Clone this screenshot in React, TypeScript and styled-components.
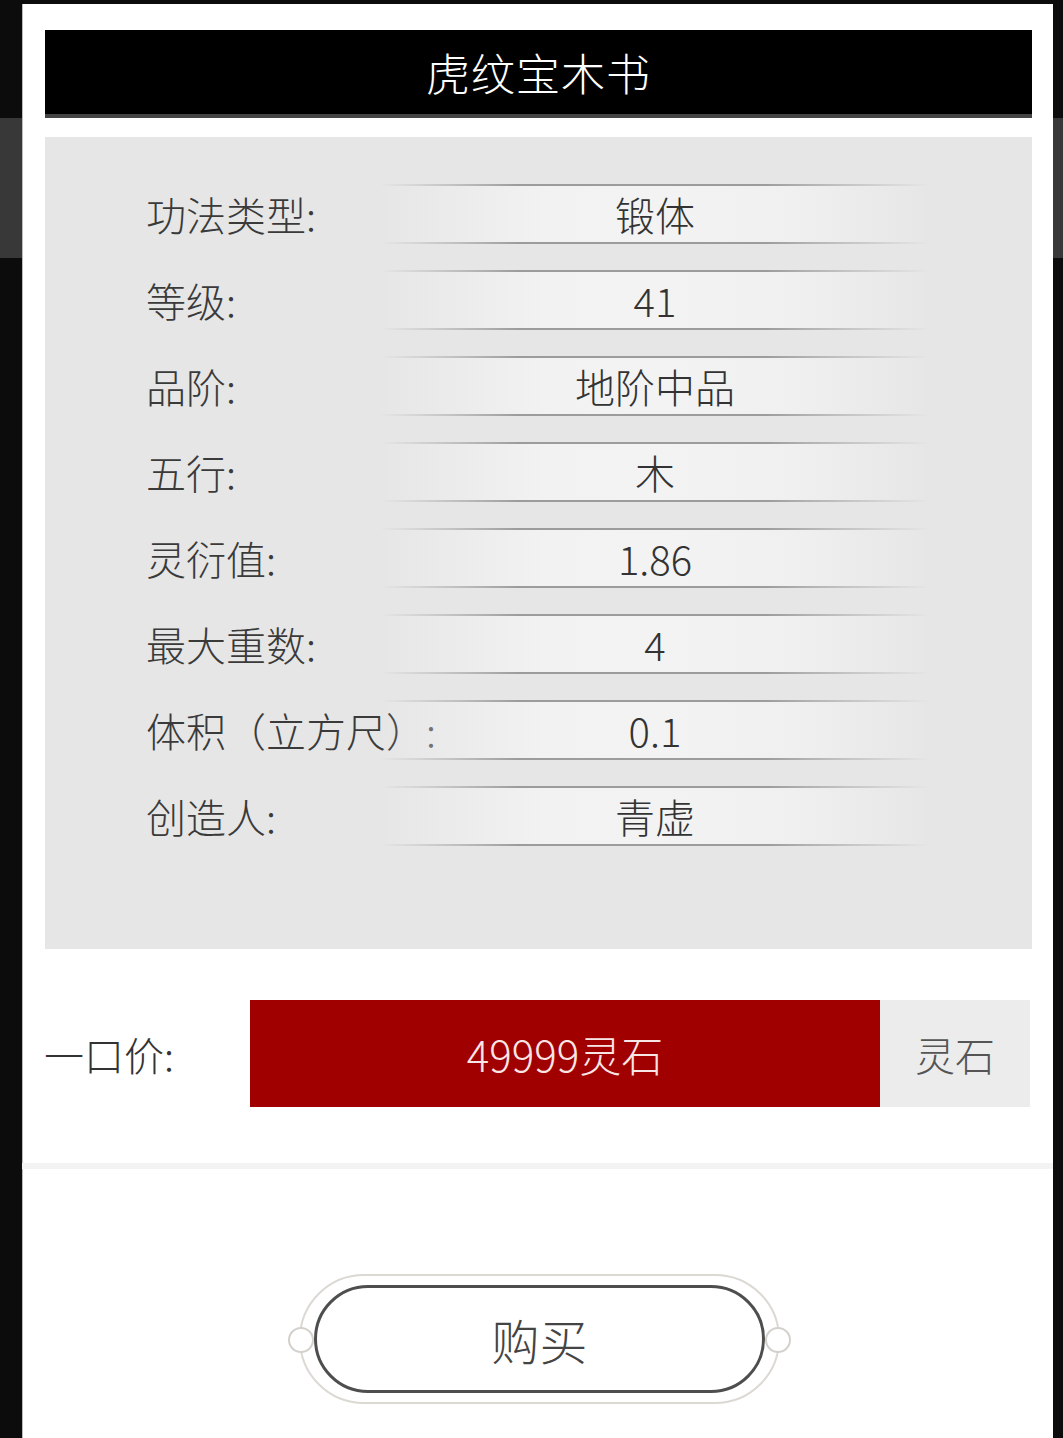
import React from "react";
import styled, { createGlobalStyle } from "styled-components";

interface Attr {
    label: string;
    value: string;
}

const attrs: Attr[] = [
    { label: "功法类型:", value: "锻体" },
    { label: "等级:", value: "41" },
    { label: "品阶:", value: "地阶中品" },
    { label: "五行:", value: "木" },
    { label: "灵衍值:", value: "1.86" },
    { label: "最大重数:", value: "4" },
    { label: "体积（立方尺）:", value: "0.1" },
    { label: "创造人:", value: "青虚" },
];

const GlobalStyle = createGlobalStyle`
  html, body {
    margin: 0;
    padding: 0;
    background: #0c0c0c;
  }
  body {
    font-family: "Noto Sans CJK SC", "Noto Sans", sans-serif;
  }
`;

// dimmed page behind the dialog
const Backdrop = styled.div`
  min-height: 1438px;
  box-sizing: border-box;
  padding: 4px 10px 0 22px;
  background: linear-gradient(
    to bottom,
    #0c0c0c 0,
    #0c0c0c 118px,
    #383838 118px,
    #383838 258px,
    #0c0c0c 258px
  );
`;

const Modal = styled.div`
  background: #fff;
  height: 1434px;
  box-sizing: border-box;
  padding: 26px 21px 0 23px;
  box-shadow: inset 1px 0 0 #bbb;
  overflow: hidden;
`;

const Title = styled.h1`
  margin: 0;
  height: 84px;
  line-height: 84px;
  background: #000;
  border-bottom: 4px solid #444;
  color: #fff;
  text-align: center;
  font-size: 44px;
  font-weight: 300;
  letter-spacing: 1px;
`;

const Panel = styled.div`
  margin-top: 19px;
  background: #e6e6e6;
  padding: 47px 102px 103px 101px;
  display: flex;
  flex-direction: column;
  gap: 26px;
`;

const Row = styled.div`
  display: flex;
  align-items: center;
  height: 60px;
`;

const Label = styled.div`
  width: 234px;
  flex-shrink: 0;
  font-size: 40px;
  font-weight: 300;
  color: #3a3a3a;
  white-space: nowrap;
`;

const Cell = styled.div`
  flex: 1;
  height: 60px;
  line-height: 60px;
  text-align: center;
  font-size: 40px;
  font-weight: 300;
  color: #333;
  background:
    linear-gradient(to right, rgba(150,150,150,0), #9c9c9c 25%, #9c9c9c 70%, rgba(150,150,150,0)) top / 100% 2px no-repeat,
    linear-gradient(to right, rgba(150,150,150,0), #9c9c9c 25%, #9c9c9c 70%, rgba(150,150,150,0)) bottom / 100% 2px no-repeat,
    linear-gradient(to right, rgba(244,244,244,0), #f2f2f2 30%, #f3f3f3 50%, #f0f0f0 75%, rgba(244,244,244,0));
`;

const PriceRow = styled.div`
  display: flex;
  align-items: stretch;
  height: 107px;
  margin: 51px 2px 0 -1px;
`;

const PriceLabel = styled.div`
  width: 206px;
  display: flex;
  align-items: center;
  font-size: 40px;
  font-weight: 300;
  color: #333;
`;

const PriceBox = styled.div`
  width: 630px;
  display: flex;
  align-items: center;
  justify-content: center;
  background: #a00000;
  color: #f8e6e6;
  font-size: 42px;
  font-weight: 300;
`;

const Unit = styled.div`
  flex: 1;
  display: flex;
  align-items: center;
  justify-content: center;
  background: #ececec;
  color: #555;
  font-size: 40px;
  font-weight: 300;
`;

const Divider = styled.div`
  height: 6px;
  margin: 56px -21px 0 -23px;
  background: #f3f3f3;
`;

const ButtonArea = styled.div`
  display: flex;
  justify-content: center;
  padding-top: 105px;
  padding-left: 2px;
`;

const ButtonFrame = styled.div`
  position: relative;
  padding: 9px 13px;
  border: 2px solid #dcd8d4;
  border-radius: 70px;

  &::before,
  &::after {
    content: "";
    position: absolute;
    top: 50%;
    width: 22px;
    height: 22px;
    margin-top: -12px;
    border-radius: 50%;
    border: 2px solid #d4d0cc;
    background: #fff;
  }
  &::before {
    left: -13px;
  }
  &::after {
    right: -13px;
  }
`;

const BuyButton = styled.button`
  display: block;
  width: 451px;
  height: 108px;
  border: 3px solid #4e4e4e;
  border-radius: 54px;
  background: #fff;
  color: #444;
  font-family: "Noto Sans CJK SC", "Noto Sans", sans-serif;
  font-size: 48px;
  font-weight: 300;
  cursor: pointer;
`;

function App() {
    return (
        <Backdrop>
            <GlobalStyle />
            <Modal>
                <Title>虎纹宝木书</Title>
                <Panel>
                    {attrs.map((a) => (
                        <Row key={a.label}>
                            <Label>{a.label}</Label>
                            <Cell>{a.value}</Cell>
                        </Row>
                    ))}
                </Panel>
                <PriceRow>
                    <PriceLabel>一口价:</PriceLabel>
                    <PriceBox>49999灵石</PriceBox>
                    <Unit>灵石</Unit>
                </PriceRow>
                <Divider />
                <ButtonArea>
                    <ButtonFrame>
                        <BuyButton>购买</BuyButton>
                    </ButtonFrame>
                </ButtonArea>
            </Modal>
        </Backdrop>
    );
}

export default App;
